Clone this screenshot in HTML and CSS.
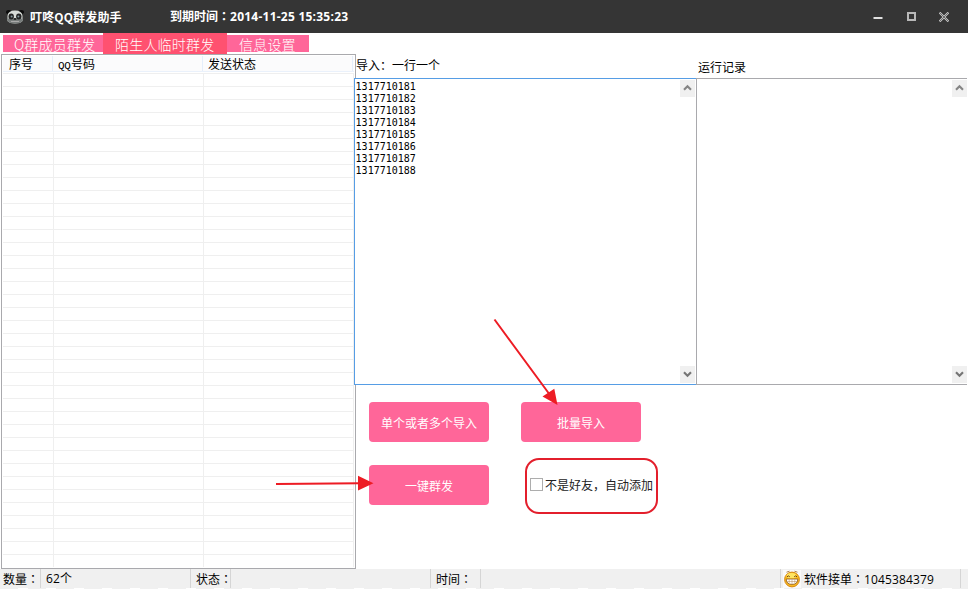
FILE: index.html
```html
<!DOCTYPE html>
<html lang="zh-CN">
<head>
<meta charset="utf-8">
<title>叮咚QQ群发助手</title>
<link rel="stylesheet" href="styles.css">
</head>
<body>
<div class="window">
  <header class="titlebar">
    <svg class="panda" width="18" height="16" viewBox="0 0 18 16">
      <ellipse cx="2.8" cy="3" rx="2.8" ry="2" fill="#0c0c0c"/><ellipse cx="15.2" cy="3" rx="2.8" ry="2" fill="#0c0c0c"/>
      <path d="M1.500 7Q2 1.500 9 1.500T16.500 7v5q-2 2.500-7.500 2.500T1.500 12z" fill="#d8dcd8"/>
      <path d="M1.500 9.500h15v2.500q-2 2.500-7.500 2.500T1.500 12z" fill="#777c7b"/>
      <ellipse cx="5.2" cy="7.500" rx="2.700" ry="2.900" fill="#242424"/><ellipse cx="12.800" cy="7.500" rx="2.700" ry="2.900" fill="#242424"/>
      <circle cx="5.600" cy="7.500" r="1" fill="#859aa0"/><circle cx="12.400" cy="7.500" r="1" fill="#859aa0"/>
      <ellipse cx="9" cy="10" rx="1.500" ry="1" fill="#202020"/><path d="M5 12.500h8" stroke="#aaa"/>
    </svg>
    <span class="app-name">叮咚QQ群发助手</span>
    <span class="expiry">到期时间<span class="colon" lang="zh-TW">：</span><span class="date">2014-11-25 15:35:23</span></span>
    <div class="controls">
      <svg width="10" height="10" viewBox="0 0 10 10"><path d="M.5 6h9" stroke="#e0e0e0" stroke-width="2"/></svg>
      <svg width="10" height="10" viewBox="0 0 10 10"><path d="M2 1h7v7H2z" fill="none" stroke="#b8b8b8" stroke-width="2"/></svg>
      <svg width="10" height="10" viewBox="0 0 10 10"><path d="M.5.5l9 9m0-9l-9 9" stroke="#c8c8c8" stroke-width="2.2"/><path d="M.5.5l9 9m0-9l-9 9" stroke="#484848" stroke-width=".7"/></svg>
    </div>
  </header>
  <nav class="tabs">
    <span class="tab tab-members">Q群成员群发</span>
    <span class="tab tab-active">陌生人临时群发</span>
    <span class="tab tab-settings">信息设置</span>
  </nav>
  <main class="content">
    <section class="list">
      <div class="list-head"><span>序号</span><span><span class="half">QQ</span>号码</span><span>发送状态</span></div>
      <div class="list-body"><i></i><i></i><i></i></div>
    </section>
    <section class="work">
      <div class="panels">
        <div class="panel panel-import">
          <div class="label">导入：一行一个</div>
          <div class="box box-focus">
            <div class="numbers">1317710181<br>1317710182<br>1317710183<br>1317710184<br>1317710185<br>1317710186<br>1317710187<br>1317710188</div>
            <div class="scroll">
              <svg width="15" height="17" viewBox="0 0 15 17"><path d="M4 9.8l3.500-3.600L11 9.800" fill="none" stroke="#858585" stroke-width="2.1"/></svg>
              <svg width="15" height="17" viewBox="0 0 15 17"><path d="M4 6.200l3.500 3.600L11 6.200" fill="none" stroke="#757575" stroke-width="2.1"/></svg>
            </div>
          </div>
        </div>
        <div class="panel panel-log">
          <div class="label">运行记录</div>
          <div class="box">
            <div class="scroll">
              <svg width="15" height="17" viewBox="0 0 15 17"><path d="M4 9.800l3.500-3.600L11 9.800" fill="none" stroke="#858585" stroke-width="2.1"/></svg>
              <svg width="15" height="17" viewBox="0 0 15 17"><path d="M4 6.200l3.500 3.600L11 6.200" fill="none" stroke="#757575" stroke-width="2.1"/></svg>
            </div>
          </div>
        </div>
      </div>
      <div class="actions">
        <div class="button">单个或者多个导入</div>
        <div class="button">批量导入</div>
        <div class="button">一键群发</div>
        <div class="option"><span class="check"></span><span class="option-text">不是好友，自动添加</span></div>
      </div>
    </section>
  </main>
  <footer class="status">
    <span class="cell c1">数量<span class="colon" lang="zh-TW">：</span></span><span class="cell c2">62个</span><span class="cell c3">状态<span class="colon" lang="zh-TW">：</span></span><span class="cell c4"></span><span class="cell c5">时间<span class="colon" lang="zh-TW">：</span></span><span class="cell c6"></span>
    <span class="cell c7"><svg width="18" height="18" viewBox="0 0 18 18">
      <rect width="18" height="18" fill="#fafafa"/>
      <circle cx="9" cy="9.500" r="7.400" fill="#f8bb20" stroke="#d88712"/>
      <ellipse cx="8.500" cy="5.800" rx="4.800" ry="2.800" fill="#ffe561"/>
      <path d="M4 6.800q1.300-1.800 2.800 0M11.200 6.800q1.300-1.800 2.800 0" fill="none" stroke="#704010"/>
      <path d="M3.500 2.200l3-1M11.500 1.200l3 1" stroke="#9c682a" stroke-width=".8"/>
      <path d="M3.200 9h11.600q0 5.400-5.800 5.400T3.200 9z" fill="#fff" stroke="#8f5314" stroke-width=".8"/>
      <path d="M3.800 11.500h10.400M6.200 9.400v4M9 9.400v4.500M11.800 9.400v4" stroke="#b08450" stroke-width=".5"/>
    </svg><span>软件接单<span class="colon" lang="zh-TW">：</span><span class="digits">1045384379</span></span></span>
  </footer>
</div>
<svg class="marks" width="968" height="589" viewBox="0 0 968 589">
  <path d="M494.500 319.500L550 395M276 484l84-.7" stroke="#ed1c24" stroke-width="2" fill="none"/>
  <path d="M557.500 405l-15-8.500 11.800-7.800zM373.500 483.200L358 490.500v-14.700z" fill="#ed1c24"/>
</svg>
</body>
</html>
```
FILE: styles.css
```css
* { box-sizing: border-box; }
body {
  margin: 0;
  width: 968px;
  height: 589px;
  overflow: hidden;
  background: #fff;
  color: #000;
  font: 12px/16px "Noto Sans CJK SC", sans-serif;
  white-space: nowrap;
}
.window { display: flex; flex-direction: column; height: 589px; }
.colon { font-family: "Noto Sans CJK TC", sans-serif; line-height: 1; }

.titlebar {
  display: flex;
  align-items: center;
  height: 33px;
  flex: none;
  padding-left: 6px;
  background: #353535;
  color: #fff;
  font-weight: 700;
}
.app-name { width: 140px; margin-left: 6px; letter-spacing: .15px; }
.expiry { flex: 1; }
.date { font-family: "Open Sans", "Noto Sans", sans-serif; letter-spacing: .24px; }
.controls { display: flex; gap: 23px; padding-right: 19px; }
.controls svg { display: block; }

.tabs {
  display: flex;
  align-items: center;
  height: 21px;
  flex: none;
  padding-left: 3px;
  color: #fff;
  font-size: 14px;
  font-weight: 300;
  letter-spacing: .2px;
}
.tab { height: 17px; line-height: 18px; background: #ff6699; }
.tab-members { width: 100px; padding-left: 11px; }
.tab-active { width: 124px; height: 21px; padding-left: 12px; line-height: 22px; background: #ff5170; }
.tab-settings { width: 82px; padding-left: 12px; }

.content { display: flex; height: 515px; flex: none; }
.list {
  display: flex;
  flex-direction: column;
  width: 355px;
  margin-left: 1px;
  flex: none;
  border: 1px solid #a9a9ad;
  padding: 1px;
}
.list-head {
  display: grid;
  grid-template-columns: 50px 150px 150px;
  height: 16px;
  background: #fbfbfc;
  border-bottom: 1px solid #eaf1fb;
}
.list-head > span { height: 15px; padding-left: 5px; border-right: 1px solid #e4eefb; line-height: 15px; }
.list-head > span:first-child { padding-left: 6px; }
.half { display: inline-block; width: 13px; font-family: "Liberation Mono", monospace; font-size: 11px; letter-spacing: -.4px; line-height: 1; }
.list-body {
  display: grid;
  grid-template-columns: 51px 150px 150px;
  flex: 1;
  margin-top: 1px;
  background: repeating-linear-gradient(#efefef 0 1px, #fff 1px 13px);
}
.list-body i { border-right: 1px solid #efefef; }

.work { flex: 1; margin-left: -2px; }
.panels { display: flex; height: 331px; }
.panel { display: flex; flex-direction: column; }
.panel-import { width: 342px; }
.panel-log { flex: 1; }
.label { height: 24px; padding: 3px 0 0 3px; }
.panel-import .label { margin-left: 2px; padding-left: 0; }
.panel-log .label { padding: 5px 0 0 2px; }
.box {
  display: flex;
  flex: 1;
  justify-content: flex-end;
  margin-right: 1px;
  padding: 1px 0;
  border: solid #a9a9ad;
  border-width: 1px 0 1px 1px;
  background: #fff;
}
.box-focus { justify-content: space-between; margin-right: 0; padding-right: 1px; border-color: #569de5; }
.numbers { padding: 1px 0 0 .6px; font: 10px/12px "DejaVu Sans Mono", monospace; }
.scroll { display: flex; flex-direction: column; justify-content: space-between; }
.scroll svg { display: block; background: #f0f0f0; }

.actions {
  display: grid;
  grid-template-columns: 120px 133px;
  grid-template-rows: 40px 56px;
  column-gap: 32px;
  row-gap: 16px;
  padding: 17px 0 0 15px;
}
.button {
  width: 120px;
  height: 40px;
  border-radius: 4px;
  background: #ff6699;
  color: #fff;
  text-align: center;
  line-height: 41px;
}
.button:nth-child(3) { margin-top: 7px; }
.option {
  display: flex;
  align-items: center;
  width: 133px;
  margin-left: 4px;
  padding-left: 3px;
  border: 2px solid #e31f2c;
  border-radius: 14px;
  color: #222;
}
.option-text { margin-top: -2px; }
.check { width: 13px; height: 13px; margin: -3px 2px 0 0; border: 1px solid #adadad; }

.status {
  display: flex;
  height: 20px;
  flex: none;
  background: repeating-linear-gradient(90deg, #f0f0f0 0 18px, #fff 18px 28px) 0 19px / 100% 1px no-repeat, linear-gradient(#f0f0f0, #f0f0f0) 0 0 / 100% 19px no-repeat;
}
.cell {
  height: 19px;
  line-height: 19px;
  padding-left: 5px;
  border-right: 1px solid #d5d5d5;
}
.c1 { width: 41px; padding-left: 3px; }
.c2 { width: 150px; }
.c3 { width: 40px; }
.c4 { width: 200px; }
.c5 { width: 50px; }
.c6 { width: 300px; }
.c7 { display: flex; gap: 3px; width: 180px; padding-left: 2px; }
.c7 svg { margin-top: 1px; }
.c2, .digits { font-family: "Open Sans", "Noto Sans CJK SC", sans-serif; letter-spacing: .13px; }

.marks { position: absolute; top: 0; left: 0; }
```
